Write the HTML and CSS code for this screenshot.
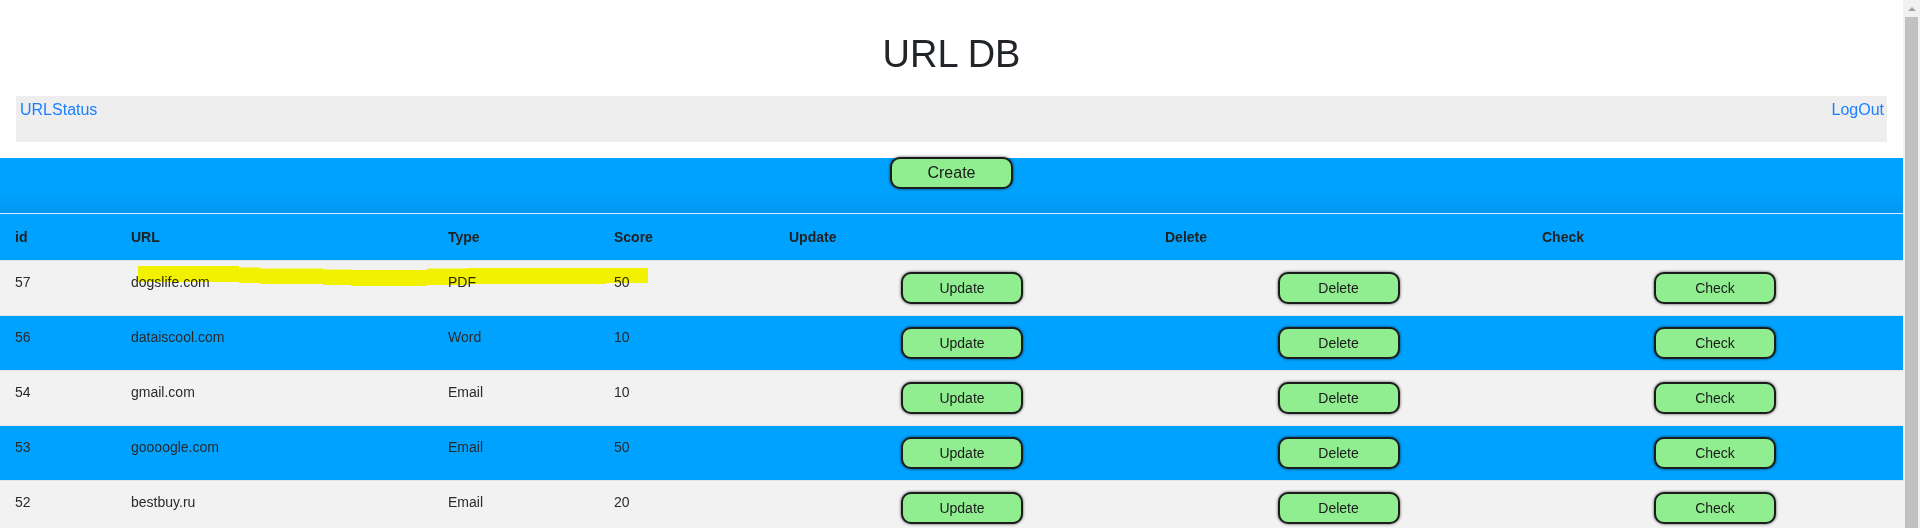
FILE: index.html
```html
<!DOCTYPE html>
<html lang="en">
<head>
<meta charset="utf-8">
<title>URL DB</title>
<link rel="stylesheet" href="styles.css">
</head>
<body>
  <div class="page">
    <main class="content">
      <h1 class="title">URL DB</h1>
      <nav class="nav">
        <a class="nav-link" href="#">URLStatus</a>
        <a class="nav-link" href="#">LogOut</a>
      </nav>
      <section class="data">
        <div class="create-band">
          <button class="btn btn-create">Create</button>
        </div>
        <table class="grid">
          <colgroup>
            <col class="c-id"><col class="c-url"><col class="c-type"><col class="c-score"><col class="c-act"><col class="c-act2"><col class="c-act">
          </colgroup>
          <thead>
            <tr><th>id</th><th>URL</th><th>Type</th><th>Score</th><th>Update</th><th>Delete</th><th>Check</th></tr>
          </thead>
          <tbody>
            <tr class="odd"><td>57</td><td>dogslife.com</td><td>PDF</td><td>50</td><td class="act"><button class="btn">Update</button></td><td class="act"><button class="btn">Delete</button></td><td class="act"><button class="btn">Check</button></td></tr>
            <tr class="even"><td>56</td><td>dataiscool.com</td><td>Word</td><td>10</td><td class="act"><button class="btn">Update</button></td><td class="act"><button class="btn">Delete</button></td><td class="act"><button class="btn">Check</button></td></tr>
            <tr class="odd"><td>54</td><td>gmail.com</td><td>Email</td><td>10</td><td class="act"><button class="btn">Update</button></td><td class="act"><button class="btn">Delete</button></td><td class="act"><button class="btn">Check</button></td></tr>
            <tr class="even"><td>53</td><td>goooogle.com</td><td>Email</td><td>50</td><td class="act"><button class="btn">Update</button></td><td class="act"><button class="btn">Delete</button></td><td class="act"><button class="btn">Check</button></td></tr>
            <tr class="odd"><td>52</td><td>bestbuy.ru</td><td>Email</td><td>20</td><td class="act"><button class="btn">Update</button></td><td class="act"><button class="btn">Delete</button></td><td class="act"><button class="btn">Check</button></td></tr>
          </tbody>
        </table>
        <svg class="highlight" viewBox="0 158 660 140" width="660" height="140" aria-hidden="true">
          <polygon fill="#ffff00" points="138,266 239,266 239,267.5 260,267.5 260,268.5 323,268.5 323,269.5 351,269.5 351,270 427,270 427,268.5 468,268.5 468,268 648,268 648,283 606,283 606,284 468,284 468,285 427,285 427,286 351,286 351,285 323,285 323,284 260,284 260,283 239,283 239,282 138,282"/>
        </svg>
      </section>
    </main>
    <div class="scrollbar" aria-hidden="true">
      <div class="sb-up"><span class="sb-arrow"></span></div>
      <div class="sb-thumb"></div>
    </div>
  </div>
</body>
</html>
```
FILE: styles.css
```css
html, body {
  height: 100%;
  overflow: hidden;
}

body {
  margin: 0;
  font-family: "Liberation Sans", Arial, sans-serif;
  color: #212529;
  background: #fff;
}

.page {
  display: flex;
  height: 100%;
}

.content {
  flex: 1;
  min-width: 0;
}

.scrollbar {
  width: 17px;
  flex: none;
  background: #f1f1f1;
  display: flex;
  flex-direction: column;
}

.sb-up {
  height: 17px;
  display: flex;
  justify-content: center;
  align-items: center;
}

.sb-arrow {
  width: 0;
  height: 0;
  border-left: 4px solid transparent;
  border-right: 4px solid transparent;
  border-bottom: 4px solid #a3a3a3;
}

.sb-thumb {
  flex: 1;
  margin: 0 2px;
  background: #c1c1c1;
}

.title {
  margin: 0 0 19px;
  padding-top: 31px;
  font-size: 38px;
  font-weight: 400;
  line-height: 46px;
  text-align: center;
  color: #212529;
}

.nav {
  margin: 0 16px 16px;
  height: 46px;
  box-sizing: border-box;
  padding: 5px 3px 0 4px;
  background: #eeeeee;
  display: flex;
  justify-content: space-between;
  align-items: flex-start;
}

.nav-link {
  font-size: 16px;
  line-height: 18px;
  color: #1a80ff;
  text-decoration: none;
}

.data {
  position: relative;
}

.create-band {
  height: 55px;
  box-sizing: border-box;
  display: flex;
  justify-content: center;
  align-items: flex-start;
  background: linear-gradient(to bottom, #00a2ff 0%, #00a2ff 62%, #0397ee 100%);
}

.btn {
  width: 122px;
  height: 32px;
  box-sizing: border-box;
  border: 2px solid #1c1c1c;
  border-radius: 10px;
  background: #90ee90;
  box-shadow: 0 0 3px rgba(0, 0, 0, 0.7);
  font-family: "Liberation Sans", Arial, sans-serif;
  font-size: 14px;
  color: #1a1a1a;
  padding: 0;
  cursor: pointer;
}

.btn-create {
  width: 123px;
  font-size: 16px;
  margin-top: -1px;
}

.grid {
  width: 100%;
  table-layout: fixed;
  border-collapse: collapse;
  font-size: 14px;
}

.c-id { width: 116px; }
.c-url { width: 317px; }
.c-type { width: 166px; }
.c-score { width: 175px; }
.c-act { width: 376px; }
.c-act2 { width: 377px; }

.grid thead th {
  height: 46px;
  padding: 0 15px;
  text-align: left;
  vertical-align: middle;
  font-weight: 700;
  color: #222;
  background: #00a2ff;
  border-top: 1px solid #d8eeff;
}

.grid tbody td {
  height: 32px;
  padding: 11px 15px;
  vertical-align: top;
  line-height: 20px;
  color: #2a2a2a;
  border-top: 1px solid #dde3e8;
}

.grid tbody td.act {
  text-align: center;
}

.odd td {
  background: #f2f2f2;
}

.even td {
  background: #00a2ff;
}

.highlight {
  position: absolute;
  top: 0;
  left: 0;
  pointer-events: none;
  mix-blend-mode: multiply;
}
```
